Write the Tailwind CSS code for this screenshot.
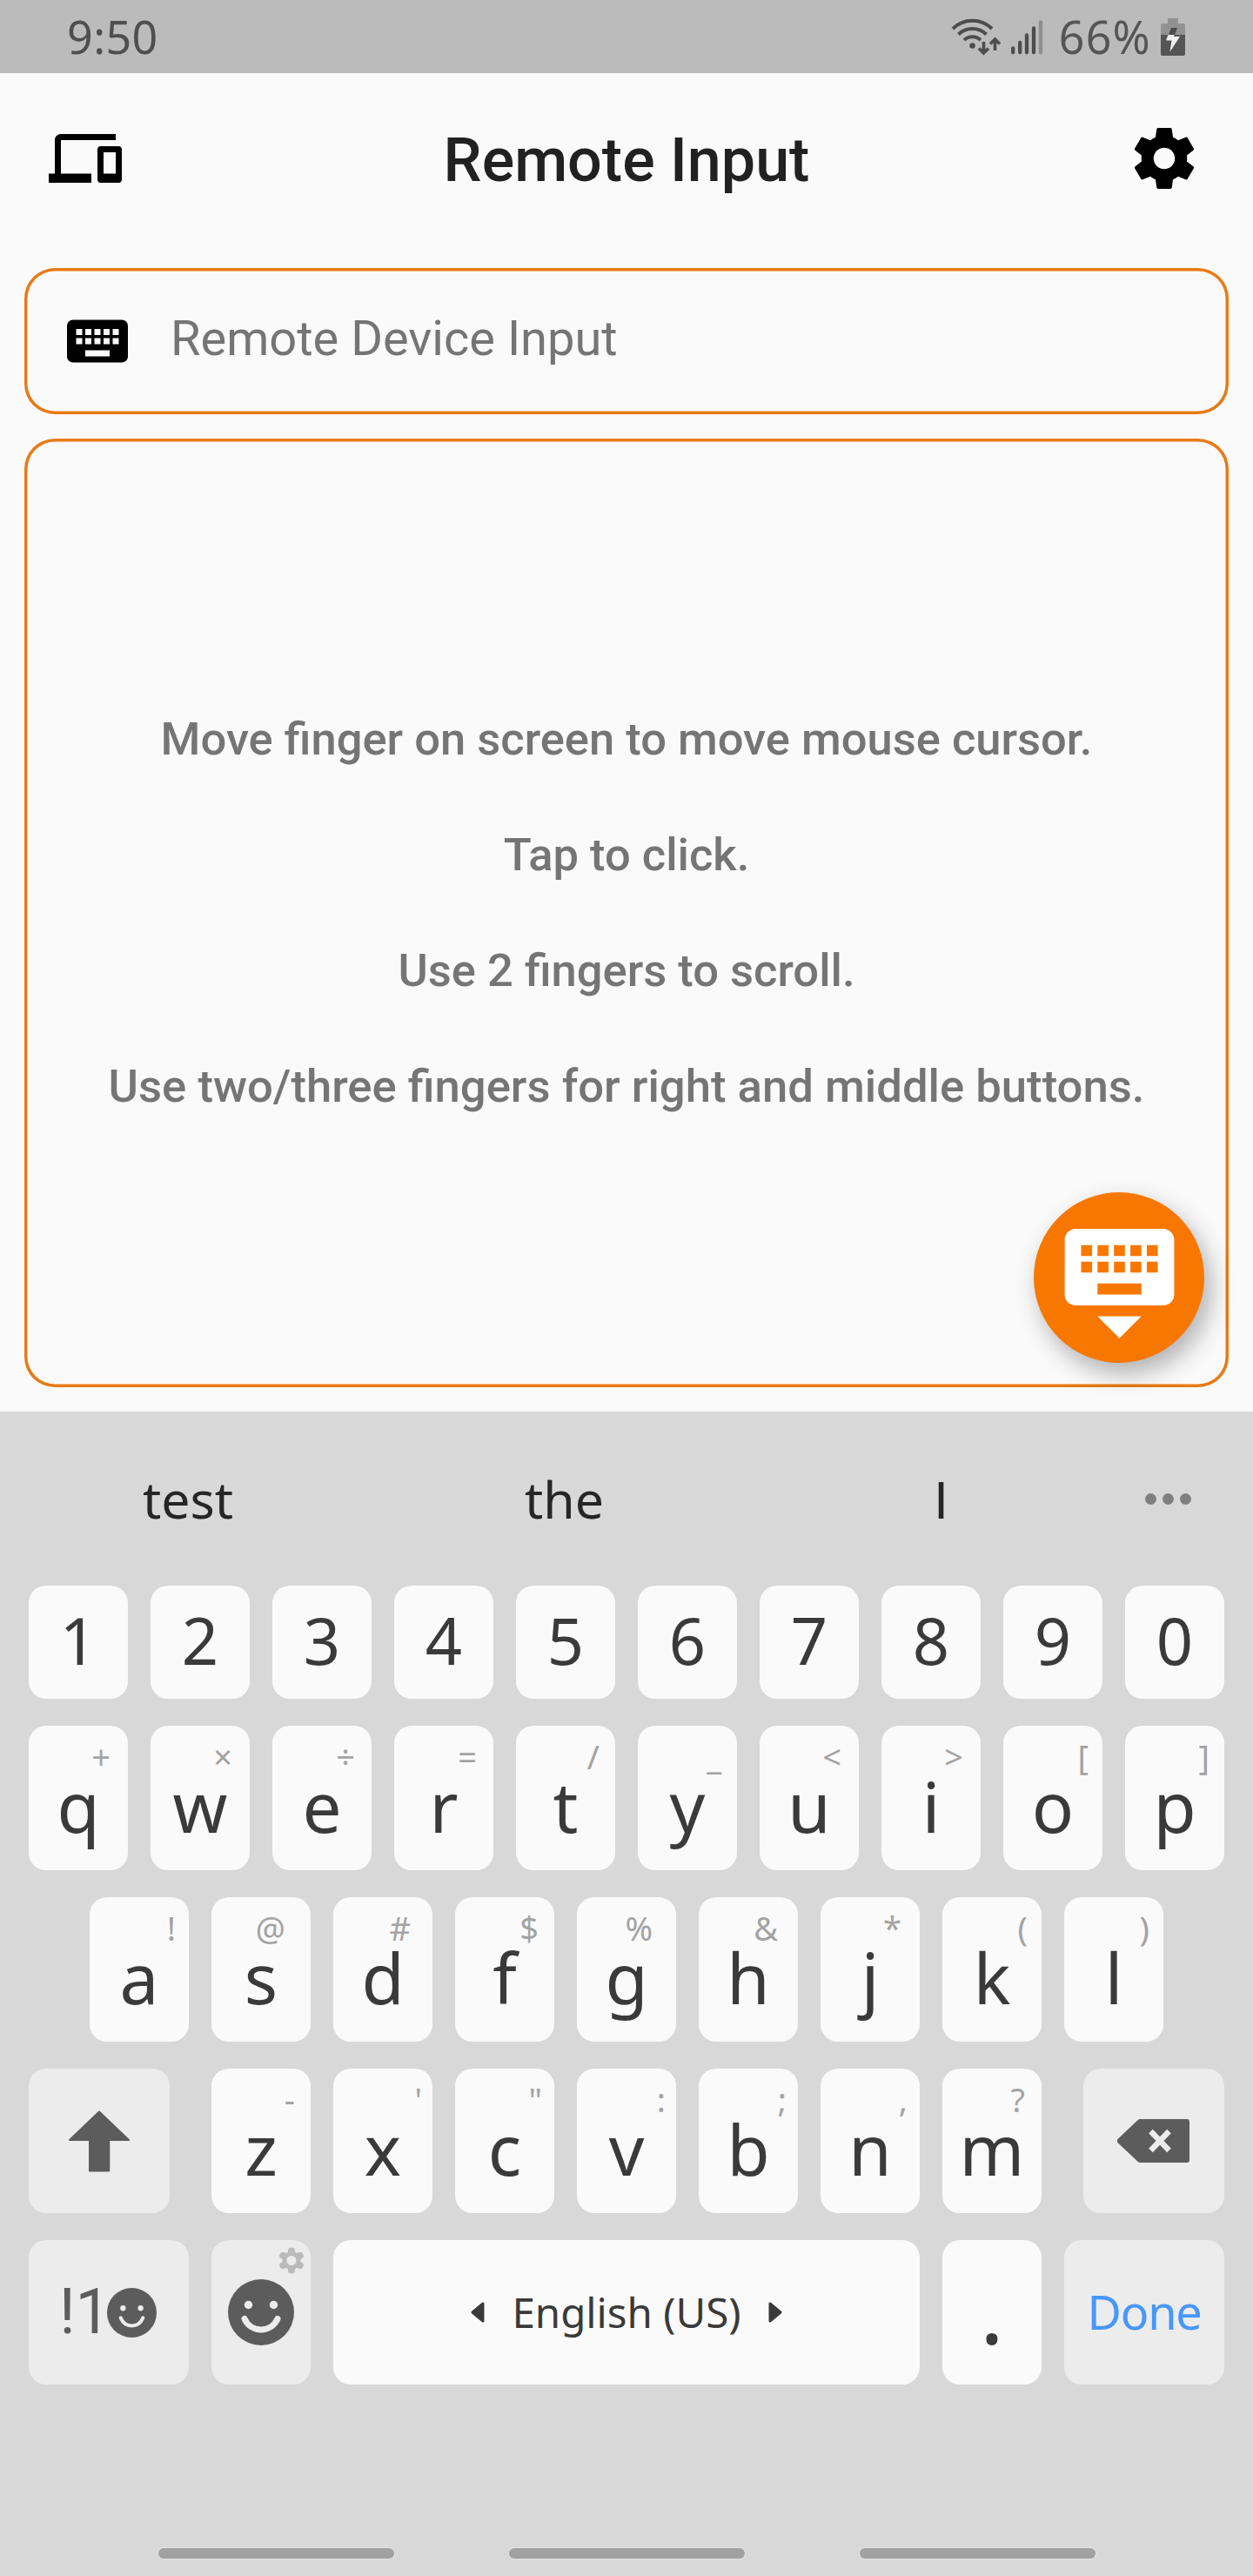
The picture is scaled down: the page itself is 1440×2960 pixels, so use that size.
<!DOCTYPE html>
<html lang="en">
<head>
<meta charset="utf-8">
<title>Remote Input</title>
<script src="https://cdn.jsdelivr.net/npm/@tailwindcss/browser@4"></script>
</head>
<body class="w-[1440px] h-[2960px] overflow-hidden bg-[#fafafa] flex flex-col font-['Noto_Sans',sans-serif]">

  <!-- Status bar -->
  <div class="h-[84px] shrink-0 bg-[#bbbbbb] flex items-center justify-between pl-[77px] pr-[78px] text-[52px] leading-[84px] text-[#555555]">
    <span class="tracking-[0.4px] text-[#4f4f4f]">9:50</span>
    <div class="flex items-center">
      <svg class="w-[58px] h-[44px]" viewBox="0 0 58 44" fill="none" stroke="#4d4d4d" stroke-width="4">
        <path d="M2 13a32 32 0 0 1 45 0M8.500 19.500a23 23 0 0 1 32 0M15 26a14 14 0 0 1 19 0"/>
        <circle cx="24.500" cy="32.500" r="3.300" fill="#4d4d4d" stroke="none"/>
        <path d="M37.500 28v12M32 35.500l5.500 5.500 5.500-5.500M50.500 38V26M45 30.500l5.500-5.500 5.500 5.500" stroke-width="3.600"/>
      </svg>
      <svg class="w-[37px] h-[44px] ml-[11px]" viewBox="0 0 37 44" stroke-width="4.300" stroke-linecap="round" stroke="#4d4d4d">
        <path d="M2.200 35.500v4.800M10.200 29v11.300M18 20.500v19.800M26 12.500v27.800"/>
        <path d="M34 5.500v34.800" stroke="#8f8f8f"/>
      </svg>
      <span class="ml-[18px] tracking-[1.2px]">66%</span>
      <svg class="w-[28px] h-[43px] ml-[11px]" viewBox="0 0 28 43">
        <path d="M8 0h12v6h6a2 2 0 0 1 2 2v12H0V8a2 2 0 0 1 2-2h6z" fill="#929292"/>
        <path d="M0 19h28v22a2 2 0 0 1-2 2H2a2 2 0 0 1-2-2z" fill="#555"/>
        <path d="M12 11h7l-3 8H9z" fill="#4d4d4d"/>
        <path d="M8.500 19H16l-1.500 2H22L10.500 38.500l2-13H6z" fill="#f0f0f0"/>
      </svg>
    </div>
  </div>

  <!-- App bar -->
  <header class="h-[196px] shrink-0 flex items-center justify-between pl-[56px] pr-[60px] font-[Roboto,sans-serif]">
    <svg class="w-[84px] h-[84px]" viewBox="0 0 24 24"><path d="M4 6h18V4H4c-1.100 0-2 .9-2 2v11H0v3h14v-3H4V6zm19 2h-6c-.55 0-1 .45-1 1v10c0 .55.45 1 1 1h6c.55 0 1-.45 1-1V9c0-.55-.45-1-1-1zm-1 9h-4v-7h4v7z"/></svg>
    <h1 class="text-[70px] leading-[84px] pt-[4px] pl-[4px] font-medium text-[#212121]">Remote Input</h1>
    <svg class="w-[84px] h-[84px]" viewBox="0 0 24 24"><path d="M19.43 12.98c.04-.32.07-.64.07-.98s-.03-.66-.07-.98l2.110-1.650c.19-.15.24-.42.12-.64l-2-3.460c-.12-.22-.39-.3-.61-.22l-2.490 1c-.52-.4-1.080-.73-1.690-.98l-.38-2.650C14.460 2.180 14.250 2 14 2h-4c-.25 0-.46.18-.49.42l-.38 2.650c-.61.25-1.170.59-1.690.98l-2.490-1c-.23-.09-.49 0-.61.22l-2 3.460c-.13.22-.07.49.12.64l2.110 1.650c-.04.32-.07.65-.07.98s.03.66.07.98l-2.110 1.650c-.19.15-.24.42-.12.64l2 3.460c.12.22.39.3.61.22l2.490-1c.52.4 1.080.73 1.690.98l.38 2.650c.03.24.24.42.49.42h4c.25 0 .46-.18.49-.42l.38-2.650c.61-.25 1.170-.59 1.690-.98l2.490 1c.23.09.49 0 .61-.22l2-3.460c.12-.22.07-.49-.12-.64l-2.110-1.650zM12 15.500c-1.930 0-3.500-1.570-3.500-3.500s1.570-3.500 3.500-3.500 3.500 1.570 3.500 3.500-1.570 3.500-3.500 3.500z"/></svg>
  </header>

  <main class="h-[1342px] shrink-0 p-[28px] flex flex-col gap-[28px] font-[Roboto,sans-serif]">
    <!-- Text entry -->
    <div class="h-[168px] shrink-0 rounded-[35px] shadow-[inset_0_0_0_3.5px_#e87a13] flex items-center pl-[42px] gap-[42px]">
      <svg class="w-[84px] h-[84px]" viewBox="0 0 24 24"><path d="M20 5H4c-1.100 0-1.990.9-1.990 2L2 17c0 1.100.9 2 2 2h16c1.100 0 2-.9 2-2V7c0-1.100-.9-2-2-2zm-9 3h2v2h-2V8zm0 3h2v2h-2v-2zM8 8h2v2H8V8zm0 3h2v2H8v-2zm-1 2H5v-2h2v2zm0-3H5V8h2v2zm9 7H8v-2h8v2zm0-4h-2v-2h2v2zm0-3h-2V8h2v2zm3 3h-2v-2h2v2zm0-3h-2V8h2v2z"/></svg>
      <span class="text-[56px] leading-[64px] pb-[6px] text-[#757575]">Remote Device Input</span>
    </div>
    <!-- Touchpad -->
    <div class="relative flex-1 rounded-[35px] shadow-[inset_0_0_0_3.5px_#e87a13] flex flex-col justify-center text-center text-[52.5px] leading-[133px] font-medium text-[#757575] whitespace-nowrap">
      <p>Move finger on screen to move mouse cursor.</p>
      <p>Tap to click.</p>
      <p>Use 2 fingers to scroll.</p>
      <p class="text-[52.65px]">Use two/three fingers for right and middle buttons.</p>
      <button class="absolute right-[28px] bottom-[28px] w-[196px] h-[196px] rounded-full bg-[#f87700] flex items-center justify-center shadow-[7px_12px_28px_rgba(0,0,0,0.30)]">
        <svg class="w-[151px] h-[151px]" viewBox="0 0 24 24" fill="#fff"><path d="M20 3H4c-1.100 0-1.990.9-1.990 2L2 15c0 1.100.9 2 2 2h16c1.100 0 2-.9 2-2V5c0-1.100-.9-2-2-2zm-9 3h2v2h-2V6zm0 3h2v2h-2V9zM8 6h2v2H8V6zm0 3h2v2H8V9zm-1 2H5V9h2v2zm0-3H5V6h2v2zm9 7H8v-2h8v2zm0-4h-2V9h2v2zm0-3h-2V6h2v2zm3 3h-2V9h2v2zm0-3h-2V6h2v2zm-7 15l4-4H8l4 4z"/></svg>
      </button>
    </div>
  </main>

  <!-- On-screen keyboard -->
  <section class="h-[1338px] shrink-0 bg-[#d8d8d8] flex flex-col">
    <div class="h-[200px] shrink-0 flex items-center text-[59px] leading-[80px] text-[#262626]">
      <span class="w-[432px] text-center">test</span>
      <span class="w-[433px] text-center">the</span>
      <span class="w-[433px] text-center pt-[5px] font-[Roboto,sans-serif]">I</span>
      <div class="ml-[18px] flex gap-[7px]">
        <i class="w-[13px] h-[13px] rounded-full bg-[#808080]"></i>
        <i class="w-[13px] h-[13px] rounded-full bg-[#808080]"></i>
        <i class="w-[13px] h-[13px] rounded-full bg-[#808080]"></i>
      </div>
    </div>

    <div class="flex flex-col gap-[31px] px-[33px] text-[#3a3a3a]">
      <div id="row-digits" class="flex justify-between h-[130px]"></div>
      <div id="row-top" class="flex justify-between h-[166px]"></div>
      <div id="row-home" class="flex justify-between h-[166px] px-[70px]"></div>
      <div class="flex justify-between h-[166px]">
        <div class="w-[162px] rounded-[20px] bg-[#ececec] flex items-center justify-center">
          <svg class="w-[70px] h-[71px]" viewBox="0 0 70 71" fill="#5c5c5c" stroke="#5c5c5c" stroke-width="2" stroke-linejoin="round"><path d="M35 1.500 69 34H46.300v35.500H24V34H1z"/></svg>
        </div>
        <div id="row-bottom" class="w-[954px] flex justify-between"></div>
        <div class="w-[162px] rounded-[20px] bg-[#ececec] flex items-center justify-center">
          <svg class="w-[84px] h-[52px]" viewBox="0 0 84 52"><path d="M23.500 2.200A4 4 0 0 1 26.500 1H80a3 3 0 0 1 3 3v44a3 3 0 0 1-3 3H26.500a4 4 0 0 1-3-1.200L1 28.500a3 3 0 0 1 0-5z" fill="#5c5c5c"/><path d="M38.500 15l21 22M59.500 15l-21 22" stroke="#ececec" stroke-width="6.500"/></svg>
        </div>
      </div>
      <div class="flex justify-between h-[166px]">
        <div class="w-[184px] rounded-[20px] bg-[#ececec] flex items-center pl-[35px] text-[#5c5c5c]">
          <span class="font-[Roboto,sans-serif] text-[72px] leading-[80px]">!1</span>
          <svg class="w-[57px] h-[57px] ml-[-4px]" viewBox="0 0 76 76"><circle cx="38" cy="38" r="38" fill="#5c5c5c"/><circle cx="24.500" cy="31" r="4.200" fill="#ececec"/><circle cx="51.500" cy="31" r="4.200" fill="#ececec"/><path d="M21 46c7 16 27 16 34 0" fill="none" stroke="#ececec" stroke-width="5.500" stroke-linecap="round"/></svg>
        </div>
        <div class="relative w-[114px] rounded-[20px] bg-[#ececec] flex items-center justify-center">
          <svg class="w-[76px] h-[76px]" viewBox="0 0 76 76"><circle cx="38" cy="38" r="38" fill="#5c5c5c"/><circle cx="23.500" cy="29.500" r="4.700" fill="#ececec"/><circle cx="52.500" cy="29.500" r="4.700" fill="#ececec"/><path d="M19 45.500c7.500 16.500 30.500 16.500 38 0" fill="none" stroke="#ececec" stroke-width="7" stroke-linecap="round"/></svg>
          <svg class="absolute right-[7px] top-[8px] w-[30px] h-[31px]" viewBox="0 0 30 31"><g stroke="#bababa" stroke-width="8" stroke-linecap="round"><path d="M15 4.500v22M5.300 10l19.400 11M24.700 10 5.300 21"/></g><circle cx="15" cy="15.500" r="10.500" fill="#bababa"/><circle cx="15" cy="15.500" r="5.500" fill="#ececec"/></svg>
        </div>
        <div class="w-[674px] rounded-[20px] bg-[#fafafa] flex items-center justify-center">
          <svg class="w-[16px] h-[24px]" viewBox="0 0 16 24"><path d="M14 2v20L2 12z" fill="#3a3a3a" stroke="#3a3a3a" stroke-width="3" stroke-linejoin="round"/></svg>
          <span class="text-[47.5px] leading-[80px] px-[31px]">English (US)</span>
          <svg class="w-[16px] h-[24px]" viewBox="0 0 16 24"><path d="M2 2v20l12-10z" fill="#3a3a3a" stroke="#3a3a3a" stroke-width="3" stroke-linejoin="round"/></svg>
        </div>
        <div class="w-[114px] rounded-[20px] bg-[#fafafa] flex justify-center text-[104px] leading-[160px]">.</div>
        <div class="w-[184px] rounded-[20px] bg-[#ececec] flex items-center justify-center text-[54px] leading-[80px] tracking-[-1.2px] pb-[3px] text-[#4797f8]">Done</div>
      </div>
    </div>

    <!-- Navigation handles -->
    <div class="mt-[188px] flex gap-[132px] pl-[182px]">
      <i class="w-[271px] h-[12px] rounded-[6px] bg-[#a1a1a1] shadow-[0_0_0_1px_#e2e2e2]"></i>
      <i class="w-[271px] h-[12px] rounded-[6px] bg-[#a1a1a1] shadow-[0_0_0_1px_#e2e2e2]"></i>
      <i class="w-[271px] h-[12px] rounded-[6px] bg-[#a1a1a1] shadow-[0_0_0_1px_#e2e2e2]"></i>
    </div>
  </section>

  <script>
    // Each letter key: [main character, secondary character, inset of the secondary from the right edge]
    const rows = {
      'row-top': [['q','+',20],['w','×',20],['e','÷',19],['r','=',19],['t','/',18],['y','_',18],['u','&lt;',20],['i','&gt;',20],['o','[',16],['p',']',17]],
      'row-home': [['a','!',15],['s','@',29],['d','#',25],['f','$',18],['g','%',27],['h','&amp;',23],['j','*',21],['k','(',16],['l',')',16]],
      'row-bottom': [['z','-',18],['x',"'",12],['c','"',14],['v',':',12],['b',';',13],['n',',',14],['m','?',19]]
    };
    document.getElementById('row-digits').innerHTML = [...'1234567890'].map(d =>
      `<div class="w-[114px] rounded-[20px] bg-[#fafafa] text-center text-[74px] leading-[126px]">${d}</div>`).join('');
    for (const [id, keys] of Object.entries(rows)) {
      document.getElementById(id).innerHTML = keys.map(([main, alt, inset]) =>
        `<div class="relative w-[114px] rounded-[20px] bg-[#fafafa] text-center text-[80px] leading-[184px] h-[166px]">${main}<span class="absolute top-[15px] text-[38px] leading-[40px] text-[#a3a3a3]" style="right:${inset}px">${alt}</span></div>`).join('');
    }
  </script>
</body>
</html>
